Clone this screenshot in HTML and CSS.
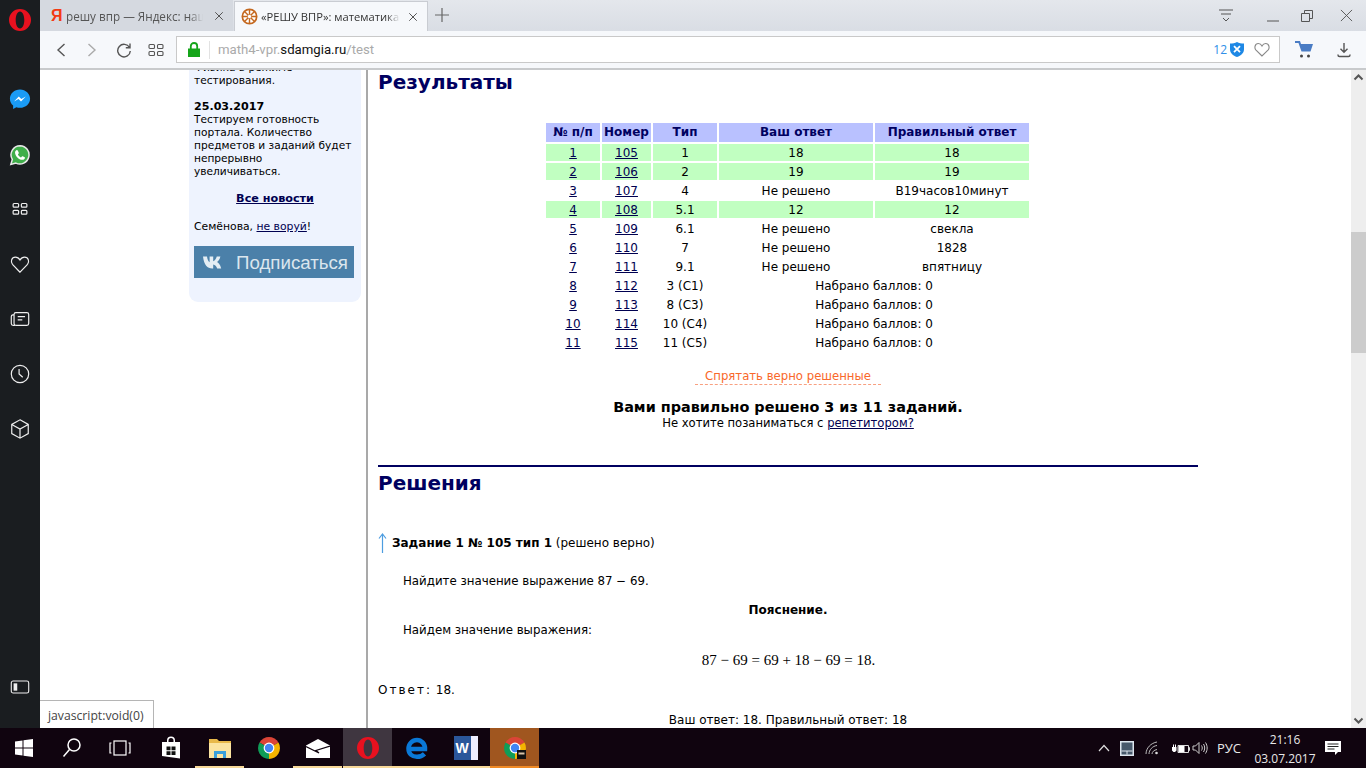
FILE: index.html
```html
<!DOCTYPE html>
<html lang="ru">
<head>
<meta charset="utf-8">
<title>РЕШУ ВПР</title>
<link rel="stylesheet" href="styles.css">
</head>
<body>
<svg class="defs" width="0" height="0" aria-hidden="true">
  <symbol id="chrome" viewBox="0 0 24 24">
    <path fill="#db4437" d="M12 12 2.500 6.500A11 11 0 0 1 21.500 6.500Z"/>
    <path fill="#0f9d58" d="M12 12 2.500 6.500A11 11 0 0 0 12 23Z"/>
    <path fill="#f4b400" d="M12 12 12 23A11 11 0 0 0 21.500 6.500Z"/>
    <circle cx="12" cy="12" r="5.400" fill="#fff"/>
    <circle cx="12" cy="12" r="4.200" fill="#4285f4"/>
  </symbol>
  <symbol id="opera" viewBox="0 0 24 24">
    <path fill="#e8111f" fill-rule="evenodd" d="M12 1a11 11 0 1 0 0 22 11 11 0 0 0 0-22Zm0 2.600c2.600 0 4.300 3.800 4.300 8.400s-1.700 8.400-4.300 8.400-4.300-3.800-4.300-8.400 1.700-8.400 4.300-8.400Z"/>
  </symbol>
</svg>

<div class="desktop">
  <nav class="rail">
    <div class="rail-logo"><svg class="i24" viewBox="0 0 24 24"><use href="#opera"/></svg></div>
    <div class="rail-items">
      <div class="rail-item"><svg class="i22" viewBox="0 0 24 24"><path fill="#1a9bf5" d="M12 1.500C5.800 1.500 1 6 1 11.700c0 3 1.300 5.600 3.500 7.400V23l3.500-2c1.300.4 2.600.6 4 .6 6.200 0 11-4.500 11-9.900S18.200 1.500 12 1.500Z"/><path fill="#fff" d="m5.500 14.700 5.200-5.500 2.700 2.700 4.900-2.700-5.200 5.500-2.700-2.700Z"/></svg></div>
      <div class="rail-item rail-wa"><svg class="i22" viewBox="0 0 24 24"><path fill="#3fae4a" stroke="#e8e8e8" stroke-width="1.600" d="M12.200 1.800a10 10 0 0 0-8.600 15.100L2 22.300l5.500-1.500a10 10 0 1 0 4.700-19Z"/><path fill="#fff" d="M8.800 6.800c.4 0 .7 0 .9.500l1 2.300c.1.300 0 .6-.2.800l-.8 1c.8 1.500 1.900 2.500 3.400 3.200l1-1.100c.2-.3.500-.3.800-.2l2.200 1.100c.3.200.4.500.3.900-.3 1.400-1.500 2.100-2.900 2-4-.4-7.600-3.900-7.900-7.800-.1-1.300.8-3 2.200-3Z"/></svg></div>
      <div class="rail-item"><svg class="i22" viewBox="0 0 24 24" fill="none" stroke="#eee" stroke-width="1.300"><rect x="4.500" y="6" width="6" height="4" rx="1"/><rect x="13.500" y="6" width="6" height="4" rx="1"/><rect x="4.500" y="13.500" width="6" height="4" rx="1"/><rect x="13.500" y="13.500" width="6" height="4" rx="1"/></svg></div>
      <div class="rail-item"><svg class="i22" viewBox="0 0 24 24" fill="none" stroke="#eee" stroke-width="1.300"><path d="M12 21 3.800 12.400C1.500 9.800 2.600 4.500 7 4.500c2.300 0 3.900 1.300 5 3.200 1.100-1.900 2.700-3.200 5-3.200 4.400 0 5.500 5.300 3.200 7.900Z"/></svg></div>
      <div class="rail-item"><svg class="i22" viewBox="0 0 24 24" fill="none" stroke="#eee" stroke-width="1.300"><rect x="5.500" y="5" width="16" height="14" rx="2"/><path d="M5.500 7.500H4a2 2 0 0 0-1.500 2V17a2 2 0 0 0 2 2h2M9.500 9.500h8M9.500 13h5"/></svg></div>
      <div class="rail-item"><svg class="i22" viewBox="0 0 24 24" fill="none" stroke="#eee" stroke-width="1.300"><circle cx="12" cy="12" r="9.500"/><path d="M11 6.500V12l4 3.500"/></svg></div>
      <div class="rail-item"><svg class="i22" viewBox="0 0 24 24" fill="none" stroke="#eee" stroke-width="1.300"><path d="M12 2 21 7v10l-9 5-9-5V7ZM3 7l9 5 9-5M12 12v10"/></svg></div>
    </div>
    <div class="rail-item rail-toggle"><svg class="i22" viewBox="0 0 24 24" fill="none" stroke="#eee" stroke-width="1.200"><rect x="2.500" y="5.500" width="19" height="13" rx="2"/><rect x="5" y="8" width="4" height="8" fill="#eee" stroke="none"/></svg></div>
  </nav>

  <div class="browser">
    <div class="tabstrip">
      <div class="tab">
        <span class="ya">Я</span>
        <span class="tab-title">решу впр — Яндекс: наш</span>
        <svg class="tab-x" viewBox="0 0 12 12"><path d="m1.500 1.500 9 9m0-9-9 9"/></svg>
      </div>
      <div class="tab tab-active">
        <svg class="favicon" viewBox="0 0 18 18"><circle cx="9" cy="9" r="7.600" fill="#fff" stroke="#c4681f" stroke-width="1.800"/><path stroke="#c4681f" stroke-width="1.500" d="M9 2v14M2 9h14M4 4l10 10M14 4 4 14"/><circle cx="9" cy="9" r="1.800" fill="#fff"/></svg>
        <span class="tab-title">«РЕШУ ВПР»: математика</span>
        <svg class="tab-x" viewBox="0 0 12 12"><path d="m1.500 1.500 9 9m0-9-9 9"/></svg>
      </div>
      <svg class="tab-new" viewBox="0 0 14 14"><path d="M7 0v14M0 7h14"/></svg>
      <div class="win-controls">
        <svg class="win-btn win-menu" viewBox="0 0 16 16"><path d="M1 2h14M3 6h10M5 10l3 3 3-3"/></svg>
        <svg class="win-btn win-min" viewBox="0 0 14 14"><path d="M1 12h12"/></svg>
        <svg class="win-btn win-max" viewBox="0 0 14 14"><path d="M1.500 4.500h8v8h-8ZM4.500 4.500v-3h8v8h-3"/></svg>
        <svg class="win-btn win-close" viewBox="0 0 14 14"><path d="m1 1 12 12m0-12L1 13"/></svg>
      </div>
    </div>

    <div class="toolbar">
      <svg class="tool tool-back" viewBox="0 0 12 16"><path d="M9.500 2 3 8l6.500 6"/></svg>
      <svg class="tool tool-forward" viewBox="0 0 12 16"><path d="M2.500 2 9 8l-6.500 6"/></svg>
      <svg class="tool tool-reload" viewBox="0 0 16 16"><path d="M13.500 5.500A6.300 6.300 0 1 0 14.300 9M14 1.500v4.200H9.800"/></svg>
      <svg class="tool tool-speed" viewBox="0 0 16 16"><rect x="1" y="2.500" width="5.500" height="4" rx="1"/><rect x="9.500" y="2.500" width="5.500" height="4" rx="1"/><rect x="1" y="9.500" width="5.500" height="4" rx="1"/><rect x="9.500" y="9.500" width="5.500" height="4" rx="1"/></svg>
      <div class="addressbar">
        <svg class="lock" viewBox="0 0 12 15"><path fill="#15a51a" d="M0 6.500h12V15H0Z"/><path fill="none" stroke="#15a51a" stroke-width="1.800" d="M2.800 7V4.200a3.200 3.200 0 0 1 6.400 0V7"/></svg>
        <span class="addr-sep"></span>
        <span class="url">math4-vpr.<b>sdamgia.ru</b>/test</span>
        <span class="block-count">12</span>
        <svg class="shield" viewBox="0 0 14 15"><path fill="#1e88e5" d="M7 0c2 1.100 4.300 1.600 7 1.600v5.600C14 11 11 13.600 7 15 3 13.600 0 11 0 7.200V1.600C2.700 1.600 5 1.100 7 0Z"/><path stroke="#fff" stroke-width="1.800" d="m4 4.200 6 6m0-6-6 6"/></svg>
        <svg class="addr-heart" viewBox="0 0 16 15"><path d="M8 14 1.800 7.800C.2 6 .8 1.500 4.300 1.500 6 1.500 7.200 2.500 8 4c.8-1.500 2-2.500 3.700-2.500 3.500 0 4.100 4.500 2.500 6.300Z"/></svg>
      </div>
      <svg class="cart" viewBox="0 0 18 17"><path fill="#4a7cc4" d="M0 0h5l1 3h12l-2.500 7.500H6.500L3.500 2H0Z"/><circle cx="6.500" cy="15" r="1.500" fill="#444"/><circle cx="13.500" cy="15" r="1.500" fill="#444"/></svg>
      <span class="tool-sep"></span>
      <svg class="tool tool-dl" viewBox="0 0 16 16"><path d="M8 1v9M4.500 6.800 8 10.300l3.500-3.500M2 12.500v.5c0 1 .7 1.500 1.500 1.500h9c.8 0 1.500-.5 1.500-1.500v-.5"/></svg>
    </div>

    <div class="page">
      <aside class="left">
        <div class="news">
          <p class="news-text">Физика в режиме<br>тестирования.</p>
          <p class="news-date">25.03.2017</p>
          <p class="news-text">Тестируем готовность<br>портала. Количество<br>предметов и заданий будет<br>непрерывно<br>увеличиваться.</p>
          <p class="news-all"><a href="#">Все новости</a></p>
          <p class="news-steal">Семёнова, <a href="#">не воруй</a>!</p>
          <div class="vk">
            <svg class="vk-mark" viewBox="0 0 22 13"><path fill="#e4edf4" d="M0 .5h4c.3 2.700 1.500 5.200 2.600 5.800V.5h3.600v4.800C11.500 5 13 3 13.800.5h3.600c-.6 2.800-2.200 4.700-3.400 5.600 1.300.7 3.300 2.500 4.200 6.400H14.200c-.7-2.200-2.200-3.900-4-4.100v4.100h-.9C4.400 12.500 1 9 0 .5Z"/></svg>
            <span class="vk-text">Подписаться</span>
          </div>
        </div>
      </aside>

      <main class="content">
        <h2 class="heading">Результаты</h2>
        <table class="results">
          <thead>
            <tr><th class="c1">№ п/п</th><th class="c2">Номер</th><th class="c3">Тип</th><th class="c4">Ваш ответ</th><th class="c5">Правильный ответ</th></tr>
          </thead>
          <tbody>
            <tr class="ok"><td><a href="#">1</a></td><td><a href="#">105</a></td><td>1</td><td>18</td><td>18</td></tr>
            <tr class="ok"><td><a href="#">2</a></td><td><a href="#">106</a></td><td>2</td><td>19</td><td>19</td></tr>
            <tr><td><a href="#">3</a></td><td><a href="#">107</a></td><td>4</td><td>Не решено</td><td>В19часов10минут</td></tr>
            <tr class="ok"><td><a href="#">4</a></td><td><a href="#">108</a></td><td>5.1</td><td>12</td><td>12</td></tr>
            <tr><td><a href="#">5</a></td><td><a href="#">109</a></td><td>6.1</td><td>Не решено</td><td>свекла</td></tr>
            <tr><td><a href="#">6</a></td><td><a href="#">110</a></td><td>7</td><td>Не решено</td><td>1828</td></tr>
            <tr><td><a href="#">7</a></td><td><a href="#">111</a></td><td>9.1</td><td>Не решено</td><td>впятницу</td></tr>
            <tr><td><a href="#">8</a></td><td><a href="#">112</a></td><td>3 (C1)</td><td colspan="2">Набрано баллов: 0</td></tr>
            <tr><td><a href="#">9</a></td><td><a href="#">113</a></td><td>8 (C3)</td><td colspan="2">Набрано баллов: 0</td></tr>
            <tr><td><a href="#">10</a></td><td><a href="#">114</a></td><td>10 (C4)</td><td colspan="2">Набрано баллов: 0</td></tr>
            <tr><td><a href="#">11</a></td><td><a href="#">115</a></td><td>11 (C5)</td><td colspan="2">Набрано баллов: 0</td></tr>
          </tbody>
        </table>
        <div class="hide-row"><span class="hide-link">Спрятать верно решенные</span></div>
        <p class="score">Вами правильно решено 3 из 11 заданий.</p>
        <p class="tutor">Не хотите позаниматься с <a href="#">репетитором?</a></p>
        <hr class="rule">
        <h2 class="heading heading-sol">Решения</h2>
        <div class="task-head">
          <svg class="up" viewBox="0 0 9 20"><path d="M4.500 20V1M1 5.500 4.500 1 8 5.500"/></svg>
          <span><b>Задание 1 № 105 тип 1</b> (решено верно)</span>
        </div>
        <p class="task-text">Найдите значение выражение 87 − 69.</p>
        <p class="expl-title">Пояснение.</p>
        <p class="expl-text">Найдем значение выражения:</p>
        <p class="formula">87 − 69 = 69 + 18 − 69 = 18.</p>
        <p class="answer"><span class="answer-label">Ответ:</span> 18.</p>
        <p class="yours">Ваш ответ: 18. Правильный ответ: 18</p>
      </main>

      <div class="scrollbar">
        <svg class="sb-arrow" viewBox="0 0 15 15"><path d="m3.500 9.500 4-4 4 4"/></svg>
        <div class="sb-thumb"></div>
        <svg class="sb-arrow sb-down" viewBox="0 0 15 15"><path d="m3.500 5.500 4 4 4-4"/></svg>
      </div>

      <div class="status-tip">javascript:void(0)</div>
    </div>
  </div>
</div>

<footer class="taskbar">
  <div class="task-left">
    <div class="tb tb-s"><svg class="ti" viewBox="0 0 24 24"><path fill="#fff" d="m3 5.500 7.500-1v7H3Zm8.500-1.200L21 3v8.500h-9.500ZM3 12.500h7.500v7L3 18.500Zm8.500 0H21V21l-9.500-1.300Z"/></svg></div>
    <div class="tb tb-s"><svg class="ti" viewBox="0 0 24 24" fill="none" stroke="#fff" stroke-width="1.500"><circle cx="14" cy="9" r="6"/><path d="m9.500 13.500-6 7"/></svg></div>
    <div class="tb tb-s"><svg class="ti" viewBox="0 0 24 24" fill="none" stroke="#fff" stroke-width="1.200"><rect x="6" y="5" width="12" height="14"/><path d="M3.500 7H2v10h1.500M20.500 7H22v10h-1.500"/></svg></div>
    <div class="tb tb-store"><svg class="ti" viewBox="0 0 24 24"><path fill="#fff" d="M3 6h5V4.500a4 4 0 0 1 8 0V6h5v16.500L3 20Zm6.500 0h5V4.500a2.500 2.500 0 0 0-5 0Z"/><path fill="#111" d="M7.500 10.500h4v3.700h-4Zm5 0h4v3.700h-4Zm-5 4.700h4V19h-4Zm5 0h4V19h-4Z"/></svg></div>
    <div class="tb tb-u"><svg class="ti" viewBox="0 0 24 24"><path fill="#e8b94a" d="M1 3h8l2 2h12v17H1Z"/><path fill="#fbe4a0" d="M1 7h22v15H1Z"/><path fill="#3aa0da" d="M6 22v-7h12v7h-3v-4H9v4Z"/></svg></div>
    <div class="tb"><svg class="ti" viewBox="0 0 24 24"><use href="#chrome"/></svg></div>
    <div class="tb tb-u"><svg class="ti" viewBox="0 0 24 24"><path fill="#fff" d="M0 9.500 12 3l12 6.500V22H0Z"/><path fill="none" stroke="#10040f" stroke-width="1.200" d="M0 10.500 13 17l-3-2.500L24 10"/></svg></div>
    <div class="tb tb-active tb-u"><svg class="ti" viewBox="0 0 24 24"><use href="#opera"/></svg></div>
    <div class="tb tb-u"><svg class="ti" viewBox="0 0 24 24" fill="none"><path stroke="#0a78d7" stroke-width="4.500" d="M3 13h17c.3-5-3.500-9-8-9-4.700 0-8.500 3.800-8.500 8.800 0 5 3.600 8 8.500 8 3 0 5.500-1 7.500-3"/></svg></div>
    <div class="tb tb-u"><div class="word"><span class="word-w">W</span></div></div>
    <div class="tb tb-orange"><svg class="ti" viewBox="0 0 24 24"><use href="#chrome"/><path fill="#111" d="M14 14h9v9H14Z"/><path fill="#d8c4a8" d="M15.500 16.500h6v2h-6Z"/></svg></div>
  </div>
  <div class="tray">
    <svg class="tray-caret" viewBox="0 0 12 8"><path d="m1 7 5-5.500L11 7"/></svg>
    <svg class="tray-touch" viewBox="0 0 14 15"><rect width="14" height="15" fill="#dde6ee"/><rect x="1.500" y="1.500" width="11" height="12" fill="#47596b"/><path stroke="#dde6ee" d="M1.500 10h11M7 10v3.500"/></svg>
    <svg class="tray-wifi" viewBox="0 0 14 14"><path d="M1 13c0-6 5-11 11-12M4 13c0-4 3.500-8 8-8.500M7 13c0-2 2-4 5-4.500"/><circle cx="11.500" cy="12" r="1.300" fill="#ddd" stroke="none"/></svg>
    <svg class="tray-batt" viewBox="0 0 18 13"><path fill="none" stroke="#ddd" d="M6 3.500h10.500v7H6ZM16.500 5.500h1v3h-1"/><path fill="#fff" d="M6.500 4h6v6h-6ZM0 5h4.500v3.500L3 10H1.500L0 8.500ZM1 2.500h1V5H1Zm2 0h1V5H3Z"/></svg>
    <svg class="tray-vol" viewBox="0 0 16 14"><path d="M1 5h2.500L7 1.500v11L3.500 9H1ZM9.500 4.500c1 1.500 1 3.500 0 5M11.500 3c1.600 2.500 1.600 5.500 0 8M13.500 1.500c2.200 3.500 2.200 7.500 0 11"/></svg>
    <span class="tray-lang">РУС</span>
    <div class="clock"><span>21:16</span><span>03.07.2017</span></div>
    <svg class="tray-note" viewBox="0 0 16 15"><path fill="#fff" d="M0 0h16v11h-3l-3 3v-3H0Z"/><path stroke="#222" d="M2.500 3h11M2.500 5.500h11M2.500 8h7"/></svg>
  </div>
</footer>
</body>
</html>
```
FILE: styles.css
```css
* { box-sizing: border-box; }
html, body { margin: 0; padding: 0; width: 1366px; height: 768px; overflow: hidden; }
body { font-family: "DejaVu Sans", Verdana, sans-serif; font-size: 12px; color: #000; background: #fff; }
p, h2 { margin: 0; }
.defs { position: absolute; }
a { color: #000050; text-decoration: underline; }

.desktop { display: flex; height: 728px; }

/* left rail */
.rail { width: 40px; flex: none; background: #1a1d20; display: flex; flex-direction: column; align-items: center; padding-bottom: 14px; }
.rail-logo { height: 40px; display: flex; align-items: center; justify-content: center; }
.rail-items { margin-top: 31px; display: flex; flex-direction: column; }
.rail-item { width: 40px; height: 55px; display: flex; align-items: center; justify-content: center; }
.rail-wa { padding-top: 2px; }
.rail-toggle { margin-top: auto; }
.i24 { width: 24px; height: 24px; }
.i22 { width: 22px; height: 22px; }

/* browser chrome */
.browser { flex: 1; min-width: 0; display: flex; flex-direction: column; }
.tabstrip { height: 31px; flex: none; background: linear-gradient(#e4e7ec, #d9dde4); display: flex; align-items: stretch; font-family: "Open Sans", sans-serif; font-size: 11.700px; }
.tab { width: 193px; display: flex; align-items: center; padding: 0 9px 0 11px; gap: 6px; color: #555; background: #d5d9e0; margin-right: 1px; }
.tab-active { width: 194px; padding-left: 6px; gap: 3px; background: #f6f8fb; color: #333; margin-top: 1px; border: 1px solid #c9ccd2; border-bottom: none; font-size: 11.200px; }
.ya { font-family: "Liberation Sans", sans-serif; font-weight: 700; font-size: 16px; color: #f33a12; width: 9px; }
.tab-title { flex: 1; min-width: 0; white-space: nowrap; overflow: hidden; -webkit-mask-image: linear-gradient(to right, #000 90%, transparent); mask-image: linear-gradient(to right, #000 90%, transparent); }
.favicon { width: 17px; height: 17px; flex: none; }
.tab-x { width: 10px; height: 10px; flex: none; fill: none; stroke: #555; stroke-width: 1.200; margin-left: 5px; }
.tab-new { width: 14px; height: 14px; margin: 8px 0 0 6px; fill: none; stroke: #666; stroke-width: 1.200; }
.win-controls { margin-left: auto; display: flex; align-items: center; padding-right: 13px; }
.win-btn { fill: none; stroke: #555; stroke-width: 1; }
.win-menu { width: 16px; height: 16px; margin-right: 32px; }
.win-min { width: 14px; height: 14px; margin-right: 20px; }
.win-max { width: 14px; height: 14px; margin-right: 26px; }
.win-close { width: 13px; height: 13px; }

.toolbar { height: 39px; flex: none; background: #f6f8fb; border-bottom: 2px solid #c8cacc; display: flex; align-items: center; padding: 0 15px 0 15px; }
.tool { fill: none; stroke: #555; stroke-width: 1.400; flex: none; }
.tool-back { width: 12px; height: 16px; margin-right: 19px; }
.tool-forward { width: 12px; height: 16px; margin-right: 18px; stroke: #aaa; }
.tool-reload { width: 16px; height: 16px; margin-right: 16px; }
.tool-speed { width: 16px; height: 16px; stroke-width: 1.100; margin-right: 12px; }
.addressbar { width: 1104px; height: 27px; flex: none; background: #fff; border: 1px solid #c9c9c9; display: flex; align-items: center; padding: 0 9px 0 11px; }
.lock { width: 12px; height: 15px; flex: none; }
.addr-sep { width: 1px; height: 18px; background: #e2e2e2; margin-left: 9px; }
.url { margin-left: 8px; font-family: Roboto, sans-serif; font-size: 13.200px; color: #aaa; }
.url b { font-weight: 400; color: #111; }
.block-count { margin-left: auto; font-family: "Open Sans", sans-serif; font-size: 12px; color: #2f8fe8; }
.shield { width: 14px; height: 15px; margin-left: 3px; }
.addr-heart { width: 16px; height: 15px; margin-left: 10px; fill: none; stroke: #888; stroke-width: 1.100; }
.cart { width: 18px; height: 17px; margin-left: 15px; flex: none; }
.tool-sep { width: 1px; height: 20px; background: #ccc; margin-left: 14px; }
.tool-dl { width: 16px; height: 16px; margin-left: 9px; }

/* page */
.page { flex: 1; min-height: 0; display: flex; position: relative; overflow: hidden; background: #fff; }
.left { width: 328px; flex: none; padding-left: 149px; border-right: 2px solid #a9a9a9; }
.news { width: 172px; margin-top: -9px; background: #eef3fe; border-radius: 0 0 9px 9px; padding: 0 5px 24px; font-size: 10.600px; line-height: 13px; }
.news-date { margin-top: 13px; font-weight: 700; font-size: 11.100px; }
.news-all { margin-top: 14px; text-align: center; font-weight: 700; font-size: 11.200px; }
.news-steal { margin-top: 15px; font-size: 10.800px; }
.vk { margin-top: 13px; width: 160px; height: 32px; background: #4b80a9; display: flex; align-items: center; padding-left: 9px; gap: 11px; }
.vk-mark { width: 22px; height: 13px; }
.vk-text { font-family: "Liberation Sans", sans-serif; font-size: 18.700px; color: #dbe6ee; }

.content { width: 820px; flex: none; margin-left: 10px; text-align: center; }
.heading { font-size: 20px; line-height: 24px; font-weight: 700; color: #000060; text-align: left; }
.results { margin: 27px 0 0 166px; border-collapse: separate; border-spacing: 2px; table-layout: fixed; width: 487px; font-size: 12px; }
.results th { background: #b9c1ff; color: #000060; height: 19px; padding: 0; font-weight: 700; line-height: 15px; }
.results td { height: 17px; padding: 2px 0 0; line-height: 15px; vertical-align: top; }
.c1 { width: 54px; } .c2 { width: 49px; } .c3 { width: 64px; } .c4 { width: 154px; } .c5 { width: 154px; }
.ok td { background: #c1ffc1; }
.hide-row { margin-top: 16px; line-height: 15px; font-size: 11.700px; }
.hide-link { display: inline-block; padding: 0 10px; color: #f9682a; border-bottom: 1px dashed #f8a080; }
.score { margin-top: 14px; font-size: 14.400px; line-height: 16px; font-weight: 700; }
.tutor { line-height: 16px; font-size: 11.600px; }
.rule { margin: 34px 0 0; border: 0; height: 2px; background: #000060; }
.heading-sol { margin-top: 4px; }
.task-head { margin-top: 38px; display: flex; align-items: center; text-align: left; gap: 5px; line-height: 18px; }
.up { width: 9px; height: 20px; fill: none; stroke: #4d9de0; stroke-width: 1.200; flex: none; }
.task-text { margin-top: 20px; padding-left: 25px; line-height: 16px; text-align: left; font-size: 11.800px; }
.expl-title { margin-top: 13px; line-height: 16px; font-weight: 700; }
.expl-text { margin-top: 4px; padding-left: 25px; line-height: 16px; text-align: left; font-size: 11.800px; }
.formula { margin-top: 12px; padding-left: 1px; font-family: "Liberation Serif", serif; font-size: 15px; line-height: 20px; }
.answer { margin-top: 12px; line-height: 16px; text-align: left; }
.answer-label { letter-spacing: 2px; }
.yours { margin-top: 14px; line-height: 16px; }

.scrollbar { position: absolute; right: 0; top: 0; bottom: 0; width: 15px; background: #eee; display: flex; flex-direction: column; }
.sb-arrow { width: 15px; height: 15px; flex: none; fill: none; stroke: #555; stroke-width: 2; }
.sb-thumb { margin-top: 147px; height: 121px; background: #ccc; flex: none; }
.sb-down { margin-top: auto; }

.status-tip { position: absolute; left: 0; bottom: 0; width: 114px; height: 28px; background: #fff; border: 1px solid #b5b5b5; border-left: 0; border-bottom: 0; padding: 6px 0 0 8px; font-family: "Open Sans", sans-serif; font-size: 12.200px; color: #444; white-space: nowrap; }

/* taskbar */
.taskbar { height: 40px; background: #10040f; display: flex; justify-content: space-between; color: #e8e8e8; font-family: "Open Sans", sans-serif; font-size: 12px; }
.task-left { display: flex; }
.tb { width: 49px; height: 40px; display: flex; align-items: center; justify-content: center; border-bottom: 2px solid transparent; padding-top: 2px; }
.tb-s { width: 48px; }
.tb-store { margin-left: 2px; }
.tb-u { border-bottom-color: #f7d898; }
.tb-active { background: #3f3640; margin-left: 1px; }
.tb-orange { background: #a0561f; border-bottom-color: #f08a24; }
.ti { width: 24px; height: 24px; }
.word { width: 24px; height: 24px; background: linear-gradient(to right, #2b579a 72%, #eef 72%); display: flex; align-items: center; padding-left: 2px; }
.word-w { font-family: "Liberation Sans", sans-serif; font-weight: 700; font-size: 14px; color: #fff; }
.tray { display: flex; align-items: center; }
.tray-caret { width: 12px; height: 8px; fill: none; stroke: #ddd; stroke-width: 1.200; margin-right: 10px; }
.tray-touch { width: 14px; height: 15px; margin-right: 11px; }
.tray-wifi { width: 14px; height: 14px; fill: none; stroke: #bbb; stroke-width: 1; margin-right: 13px; }
.tray-batt { width: 18px; height: 13px; margin-right: 2px; }
.tray-vol { width: 16px; height: 14px; fill: none; stroke: #ccc; stroke-width: 1; margin-right: 9px; }
.tray-lang { font-size: 13px; margin-right: 11px; }
.clock { display: flex; flex-direction: column; align-items: center; line-height: 19px; width: 66px; margin-right: 7px; padding-top: 1px; }
.tray-note { width: 16px; height: 15px; margin-right: 25px; }
```
